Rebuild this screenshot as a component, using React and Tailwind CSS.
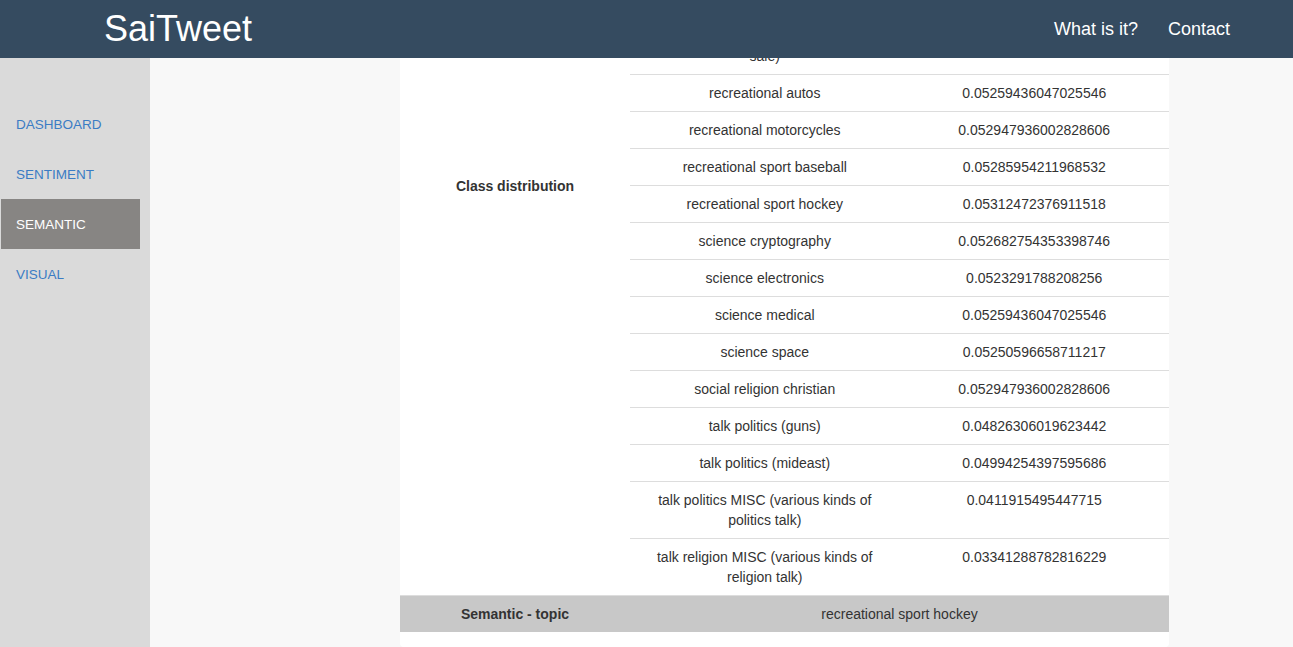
import React from 'react';

const navItems = [
  { label: 'DASHBOARD', active: false },
  { label: 'SENTIMENT', active: false },
  { label: 'SEMANTIC', active: true },
  { label: 'VISUAL', active: false },
];

// rows above "recreational autos" are scrolled out of view, kept so the label stays centred
const classRows = [
  ['alt atheism', '0.0424091233056782'],
  ['comp graphics', '0.0516658783190549'],
  ['comp os ms-windows MISC (various kinds of windows talk)', '0.0522597190254236'],
  ['comp sys ibm pc hardware', '0.0520987143071955'],
  ['comp sys mac hardware', '0.0510884231962917'],
  ['comp windows x', '0.0524969101246385'],
  ['misc forsale (various kinds of items for sale)', '0.0517133067462914'],
  ['recreational autos', '0.05259436047025546'],
  ['recreational motorcycles', '0.052947936002828606'],
  ['recreational sport baseball', '0.05285954211968532'],
  ['recreational sport hockey', '0.05312472376911518'],
  ['science cryptography', '0.052682754353398746'],
  ['science electronics', '0.0523291788208256'],
  ['science medical', '0.05259436047025546'],
  ['science space', '0.05250596658711217'],
  ['social religion christian', '0.052947936002828606'],
  ['talk politics (guns)', '0.04826306019623442'],
  ['talk politics (mideast)', '0.04994254397595686'],
  ['talk politics MISC (various kinds of politics talk)', '0.0411915495447715'],
  ['talk religion MISC (various kinds of religion talk)', '0.03341288782816229'],
];

const App = () => {
  return (
    <div className="h-[647px] flex flex-col overflow-hidden font-['Liberation_Sans',Arial,sans-serif] text-[14px] leading-[20px] text-[#333]">
      <header className="h-[58px] shrink-0 bg-[#354b60] flex items-center justify-between pl-[104px] pr-[48px] text-white">
        <div className="text-[36px] leading-[40px]">SaiTweet</div>
        <nav className="flex items-center text-[18px] leading-[24px]">
          <a className="px-[15px]">What is it?</a>
          <a className="px-[15px]">Contact</a>
        </nav>
      </header>

      <div className="flex flex-1 min-h-0">
        <aside className="w-[150px] shrink-0 bg-[#dadada] pt-[41px]">
          <ul className="ml-px w-[139px]">
            {navItems.map((item) => (
              <li
                key={item.label}
                className={`h-[50px] flex items-center pl-[15px] pt-[2px] text-[13.5px] ${
                  item.active ? 'bg-[#878583] text-white' : 'text-[#3a7cc4]'
                }`}
              >
                {item.label}
              </li>
            ))}
          </ul>
        </aside>

        <main className="flex-1 bg-[#f8f8f8] overflow-hidden">
          <div className="ml-[250px] w-[769px] -mt-[283px] bg-white rounded-[4px] pb-[15px]">
            <table className="w-full table-fixed border-collapse">
              <tbody>
                <tr>
                  <td className="w-[230px] px-2 pt-[10px] pb-2 align-middle text-center font-bold">Class distribution</td>
                  <td className="p-0 align-top">
                    <table className="w-full table-fixed border-collapse">
                      <tbody>
                        {classRows.map(([name, value]) => (
                          <tr key={name}>
                            <td className="w-1/2 p-2 align-top text-center border-t border-[#ddd]">{name}</td>
                            <td className="w-1/2 p-2 align-top text-center border-t border-[#ddd]">{value}</td>
                          </tr>
                        ))}
                      </tbody>
                    </table>
                  </td>
                </tr>
                <tr className="bg-[#c8c8c8]">
                  <td className="p-2 align-top text-center font-bold border-t border-[#ddd]">Semantic - topic</td>
                  <td className="p-2 align-top text-center border-t border-[#ddd]">recreational sport hockey</td>
                </tr>
              </tbody>
            </table>
          </div>
        </main>
      </div>
    </div>
  );
};

export default App;
